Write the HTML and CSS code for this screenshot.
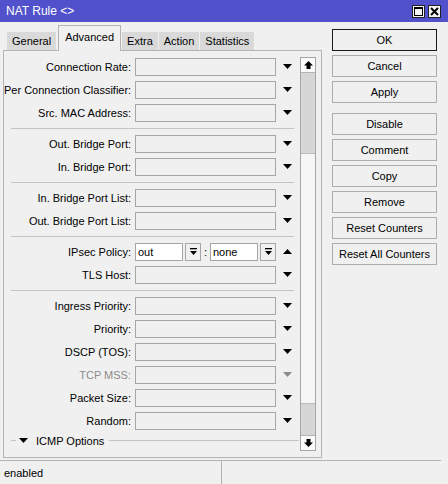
FILE: index.html
```html
<!DOCTYPE html>
<html>
<head>
<meta charset="utf-8">
<link rel="stylesheet" href="styles.css">
</head>
<body>
<div class="win">
  <div class="title">
    <span class="title-text">NAT Rule &lt;&gt;</span>
    <div class="tbtns">
      <span class="tbtn"><svg width="11" height="11" viewBox="0 0 11 11"><rect x="1.5" y="1.5" width="8" height="8" fill="none" stroke="#000" stroke-width="1"/><rect x="1" y="1" width="9" height="2" fill="#000"/></svg></span>
      <span class="tbtn"><svg width="11" height="11" viewBox="0 0 11 11"><path d="M2 2 L9 9 M9 2 L2 9" stroke="#000" stroke-width="2"/></svg></span>
    </div>
  </div>
  <div class="main">
    <div class="left">
      <div class="tabs">
        <div class="tab">General</div>
        <div class="tab active">Advanced</div>
        <div class="tab">Extra</div>
        <div class="tab">Action</div>
        <div class="tab">Statistics</div>
      </div>
      <div class="panel">
        <div class="form">
          <div class="row"><span class="lbl">Connection Rate:</span><span class="inp"></span><svg class="dd" width="9" height="5" viewBox="0 0 9 5"><path d="M0 0 H9 L4.5 5 Z"/></svg></div>
          <div class="row"><span class="lbl">Per Connection Classifier:</span><span class="inp"></span><svg class="dd" width="9" height="5" viewBox="0 0 9 5"><path d="M0 0 H9 L4.5 5 Z"/></svg></div>
          <div class="row"><span class="lbl">Src. MAC Address:</span><span class="inp"></span><svg class="dd" width="9" height="5" viewBox="0 0 9 5"><path d="M0 0 H9 L4.5 5 Z"/></svg></div>
          <div class="sep"></div>
          <div class="row"><span class="lbl">Out. Bridge Port:</span><span class="inp"></span><svg class="dd" width="9" height="5" viewBox="0 0 9 5"><path d="M0 0 H9 L4.5 5 Z"/></svg></div>
          <div class="row"><span class="lbl">In. Bridge Port:</span><span class="inp"></span><svg class="dd" width="9" height="5" viewBox="0 0 9 5"><path d="M0 0 H9 L4.5 5 Z"/></svg></div>
          <div class="sep"></div>
          <div class="row"><span class="lbl">In. Bridge Port List:</span><span class="inp"></span><svg class="dd" width="9" height="5" viewBox="0 0 9 5"><path d="M0 0 H9 L4.5 5 Z"/></svg></div>
          <div class="row"><span class="lbl">Out. Bridge Port List:</span><span class="inp"></span><svg class="dd" width="9" height="5" viewBox="0 0 9 5"><path d="M0 0 H9 L4.5 5 Z"/></svg></div>
          <div class="sep"></div>
          <div class="row">
            <span class="lbl">IPsec Policy:</span>
            <span class="inp small white">out</span>
            <span class="sbtn"><svg width="9" height="9" viewBox="0 0 9 9"><rect x="1" y="1" width="7" height="1.3"/><path d="M1 4 H8 L4.5 8 Z"/></svg></span>
            <span class="colon">:</span>
            <span class="inp small white">none</span>
            <span class="sbtn"><svg width="9" height="9" viewBox="0 0 9 9"><rect x="1" y="1" width="7" height="1.3"/><path d="M1 4 H8 L4.5 8 Z"/></svg></span>
            <svg class="dd" width="9" height="5" viewBox="0 0 9 5"><path d="M0 5 H9 L4.5 0 Z"/></svg>
          </div>
          <div class="row"><span class="lbl">TLS Host:</span><span class="inp"></span><svg class="dd" width="9" height="5" viewBox="0 0 9 5"><path d="M0 0 H9 L4.5 5 Z"/></svg></div>
          <div class="sep"></div>
          <div class="row"><span class="lbl">Ingress Priority:</span><span class="inp"></span><svg class="dd" width="9" height="5" viewBox="0 0 9 5"><path d="M0 0 H9 L4.5 5 Z"/></svg></div>
          <div class="row"><span class="lbl">Priority:</span><span class="inp"></span><svg class="dd" width="9" height="5" viewBox="0 0 9 5"><path d="M0 0 H9 L4.5 5 Z"/></svg></div>
          <div class="row"><span class="lbl">DSCP (TOS):</span><span class="inp"></span><svg class="dd" width="9" height="5" viewBox="0 0 9 5"><path d="M0 0 H9 L4.5 5 Z"/></svg></div>
          <div class="row disabled"><span class="lbl">TCP MSS:</span><span class="inp"></span><svg class="dd" width="9" height="5" viewBox="0 0 9 5"><path d="M0 0 H9 L4.5 5 Z"/></svg></div>
          <div class="row"><span class="lbl">Packet Size:</span><span class="inp"></span><svg class="dd" width="9" height="5" viewBox="0 0 9 5"><path d="M0 0 H9 L4.5 5 Z"/></svg></div>
          <div class="row"><span class="lbl">Random:</span><span class="inp"></span><svg class="dd" width="9" height="5" viewBox="0 0 9 5"><path d="M0 0 H9 L4.5 5 Z"/></svg></div>
          <div class="group">
            <span class="gline short"></span>
            <svg class="gtri" width="9" height="5" viewBox="0 0 9 5"><path d="M0 0 H9 L4.5 5 Z"/></svg>
            <span class="gtext">ICMP Options</span>
            <span class="gline long"></span>
          </div>
        </div>
        <div class="sb">
          <div class="sbb"><svg width="9" height="8" viewBox="0 0 9 8"><path d="M4.5 0 L9 4.5 H6.5 V8 H2.5 V4.5 H0 Z"/></svg></div>
          <div class="sbgrey top"></div>
          <div class="sbtrack"></div>
          <div class="sbgrey bottom"></div>
          <div class="sbb"><svg width="9" height="8" viewBox="0 0 9 8"><path d="M4.5 8 L9 3.5 H6.5 V0 H2.5 V3.5 H0 Z"/></svg></div>
        </div>
      </div>
    </div>
    <div class="right">
      <div class="btn default">OK</div>
      <div class="btn">Cancel</div>
      <div class="btn">Apply</div>
      <div class="btn gap">Disable</div>
      <div class="btn">Comment</div>
      <div class="btn">Copy</div>
      <div class="btn">Remove</div>
      <div class="btn">Reset Counters</div>
      <div class="btn">Reset All Counters</div>
    </div>
  </div>
  <div class="status">
    <div class="st first">enabled</div>
    <div class="st"></div>
  </div>
</div>
</body>
</html>
```

FILE: styles.css
```css
html, body {
  margin: 0;
  padding: 0;
}
body {
  background: #f0f0f0;
  font-family: "Liberation Sans", Arial, sans-serif;
  font-size: 11px;
  color: #000;
}
.win {
  width: 448px;
  height: 484px;
  display: flex;
  flex-direction: column;
  background: #f0f0f0;
  overflow: hidden;
}
.title {
  height: 22px;
  flex: none;
  background: #5051cb;
  color: #fff;
  display: flex;
  align-items: center;
  justify-content: space-between;
  padding: 0 7px 0 6px;
}
.title-text {
  font-size: 12px;
}
.tbtns {
  display: flex;
  gap: 3px;
}
.tbtn {
  width: 13px;
  height: 13px;
  box-sizing: border-box;
  background: #f4f4f4;
  border: 1px solid #222;
  display: flex;
  align-items: center;
  justify-content: center;
}
.main {
  flex: 1;
  display: flex;
  min-height: 0;
}
.left {
  width: 319px;
  margin-left: 3px;
  display: flex;
  flex-direction: column;
}
.tabs {
  height: 25px;
  flex: none;
  margin-top: 3px;
  display: flex;
  align-items: flex-end;
  padding-left: 4px;
  gap: 1px;
  position: relative;
  z-index: 1;
}
.tab {
  height: 18px;
  background: #d9d9d9;
  padding: 0 5px;
  display: flex;
  align-items: center;
  box-sizing: border-box;
  font-size: 11px;
}
.tab.active {
  height: 26px;
  margin-bottom: -1px;
  margin-left: 1px;
  background: #f0f0f0;
  border: 1px solid #b4b4b4;
  border-bottom: none;
  padding: 0 6px 3px;
  font-size: 11px;
}
.panel {
  height: 410px;
  box-sizing: border-box;
  border: 1px solid #b4b4b4;
  display: flex;
}
.form {
  flex: 1;
  padding-top: 4px;
  overflow: hidden;
}
.row {
  height: 23px;
  display: flex;
  align-items: center;
}
.lbl {
  width: 127px;
  text-align: right;
  white-space: nowrap;
  flex: none;
}
.inp {
  width: 141px;
  height: 18px;
  box-sizing: border-box;
  border: 1px solid #a6a6a6;
  background: #f0f0f0;
  margin-left: 4px;
  flex: none;
  display: flex;
  align-items: center;
  padding-left: 2px;
  font-size: 11px;
}
.inp.small {
  width: 48px;
}
.inp.white {
  background: #fff;
}
.sbtn {
  width: 16px;
  height: 18px;
  box-sizing: border-box;
  border: 1px solid #a6a6a6;
  background: #f0f0f0;
  margin-left: 2px;
  display: flex;
  align-items: center;
  justify-content: center;
  flex: none;
}
.colon {
  width: 9px;
  text-align: center;
  flex: none;
}
.colon + .inp {
  margin-left: 0;
}
.dd {
  margin-left: 7px;
  flex: none;
  fill: #000;
}
.disabled .lbl {
  color: #8c8c8c;
}
.disabled .dd {
  fill: #8c8c8c;
}
.sep {
  height: 8px;
  position: relative;
}
.sep::after {
  content: "";
  position: absolute;
  left: 7px;
  width: 283px;
  top: 4px;
  height: 1px;
  background: #c4c4c4;
}
.group {
  height: 17px;
  display: flex;
  align-items: center;
}
.gline {
  height: 1px;
  background: #c4c4c4;
}
.gline.short {
  width: 5px;
  margin-left: 7px;
}
.gtri {
  margin-left: 3px;
  fill: #000;
}
.gtext {
  margin-left: 8px;
  white-space: nowrap;
}
.gline.long {
  width: 190px;
  margin-left: 5px;
}
.sb {
  width: 16px;
  margin: 6px 5px 6px 0;
  box-sizing: border-box;
  border: 1px solid #a6a6a6;
  display: flex;
  flex-direction: column;
  background: #f6f6f6;
}
.sbb {
  height: 14px;
  flex: none;
  background: #fbfbfb;
  display: flex;
  align-items: center;
  justify-content: center;
}
.sbb:first-child {
  border-bottom: 1px solid #b4b4b4;
}
.sbb:last-child {
  border-top: 1px solid #b4b4b4;
}
.sbgrey {
  background: #d6d6d6;
  flex: none;
}
.sbgrey.top {
  height: 80px;
  border-bottom: 1px solid #bcbcbc;
}
.sbgrey.bottom {
  height: 31px;
  border-top: 1px solid #bcbcbc;
}
.sbtrack {
  flex: 1;
}
.right {
  width: 105px;
  margin-left: 10px;
  padding-top: 7px;
  display: flex;
  flex-direction: column;
  gap: 4px;
}
.btn {
  height: 22px;
  box-sizing: border-box;
  border: 1px solid #adadad;
  background: #f0f0f0;
  display: flex;
  align-items: center;
  justify-content: center;
  white-space: nowrap;
  font-size: 11px;
}
.btn.default {
  border-color: #1a1a1a;
}
.btn.gap {
  margin-top: 6px;
}
.status {
  height: 23px;
  flex: none;
  margin-top: 2px;
  border-top: 1px solid #b4b4b4;
  display: flex;
  margin-right: 7px;
}
.st {
  flex: 1;
  display: flex;
  align-items: center;
  padding-left: 4px;
  font-size: 11px;
}
.st.first {
  flex: none;
  width: 217px;
  border-right: 1px solid #b4b4b4;
}
```
